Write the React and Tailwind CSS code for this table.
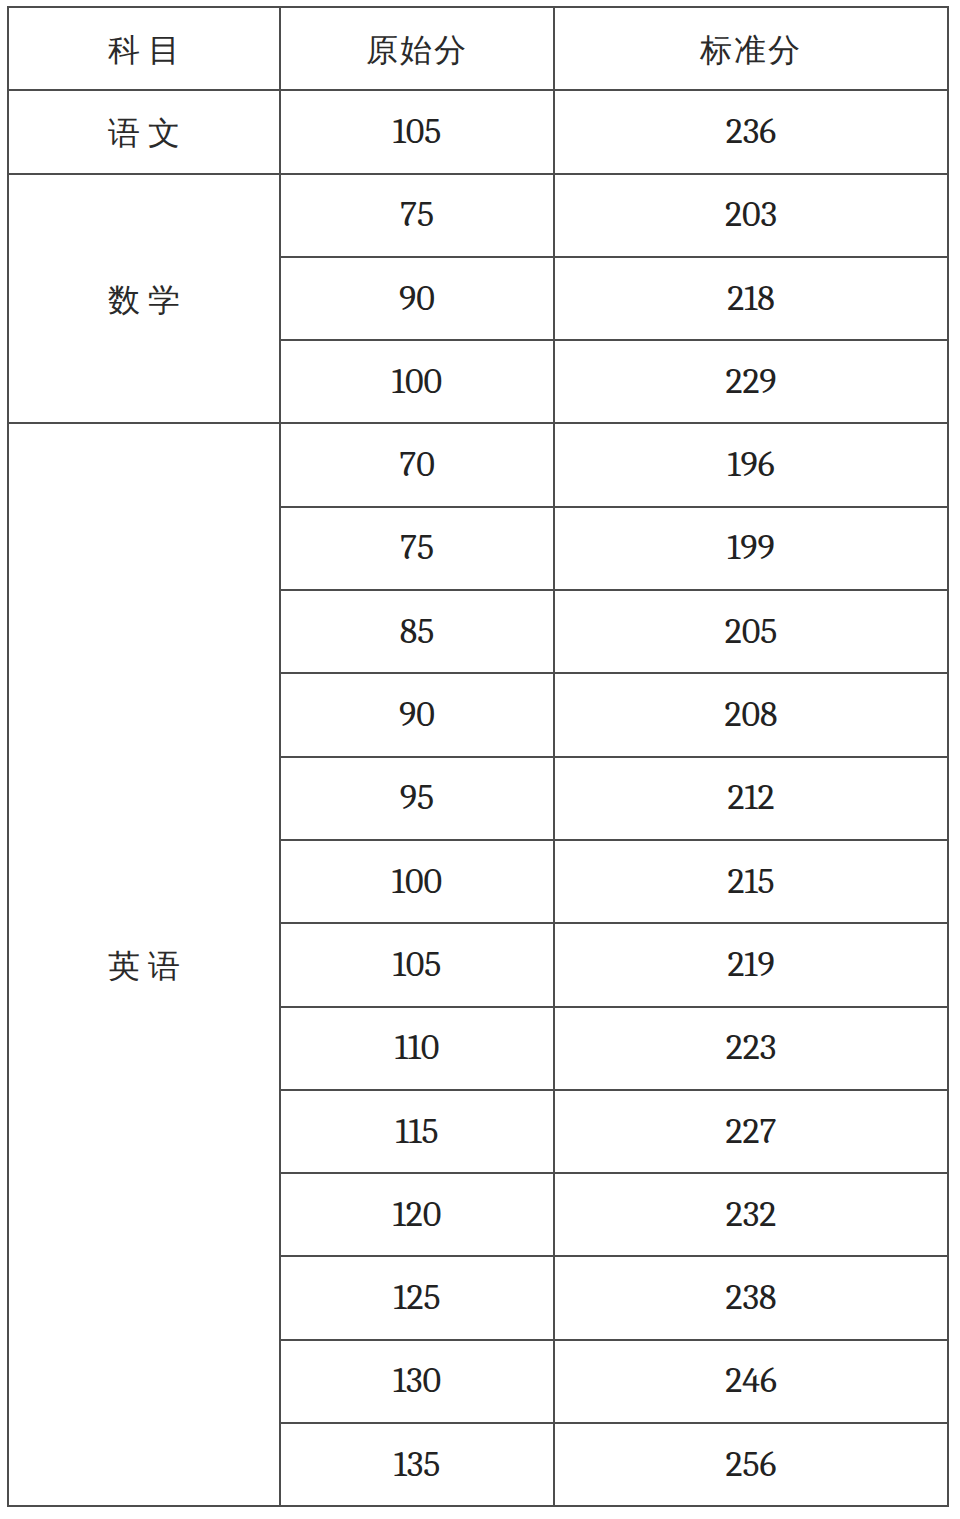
import React from 'react';

// 数学 / 英语 raw → standard score pairs
const math = [
  ['75', '203'],
  ['90', '218'],
  ['100', '229'],
];

const english = [
  ['70', '196'],
  ['75', '199'],
  ['85', '205'],
  ['90', '208'],
  ['95', '212'],
  ['100', '215'],
  ['105', '219'],
  ['110', '223'],
  ['115', '227'],
  ['120', '232'],
  ['125', '238'],
  ['130', '246'],
  ['135', '256'],
];

const td = 'border-2 border-[#4d4d4d] text-center align-middle p-0';

const Subject = ({ children, rows }) => (
  <td rowSpan={rows} className={td}>
    <span className="font-sans text-[32px] text-[#2a2a2a] tracking-[8px] pl-[8px]">{children}</span>
  </td>
);

const Head = ({ children }) => (
  <td className={td}>
    <span className="font-sans text-[32px] text-[#2a2a2a] tracking-[2px]">{children}</span>
  </td>
);

const Num = ({ children }) => (
  <td className={td}>
    <span className="font-serif text-[36px] text-[#222]">{children}</span>
  </td>
);

export default function App() {
  return (
    <div className="w-[960px] h-[1519px] bg-white pt-[6px] pl-[7px] font-['Liberation_Serif','DejaVu_Serif',serif]">
      <table className="border-collapse table-fixed w-[940px]">
        <colgroup>
          <col className="w-[272px]" />
          <col className="w-[274px]" />
          <col className="w-[394px]" />
        </colgroup>
        <tbody>
          <tr className="h-[83.3px]">
            <Subject>科目</Subject>
            <Head>原始分</Head>
            <Head>标准分</Head>
          </tr>
          <tr className="h-[83.3px]">
            <Subject>语文</Subject>
            <Num>105</Num>
            <Num>236</Num>
          </tr>
          {math.map(([raw, std], i) => (
            <tr key={`m${i}`} className="h-[83.3px]">
              {i === 0 && <Subject rows={math.length}>数学</Subject>}
              <Num>{raw}</Num>
              <Num>{std}</Num>
            </tr>
          ))}
          {english.map(([raw, std], i) => (
            <tr key={`e${i}`} className="h-[83.3px]">
              {i === 0 && <Subject rows={english.length}>英语</Subject>}
              <Num>{raw}</Num>
              <Num>{std}</Num>
            </tr>
          ))}
        </tbody>
      </table>
    </div>
  );
}
